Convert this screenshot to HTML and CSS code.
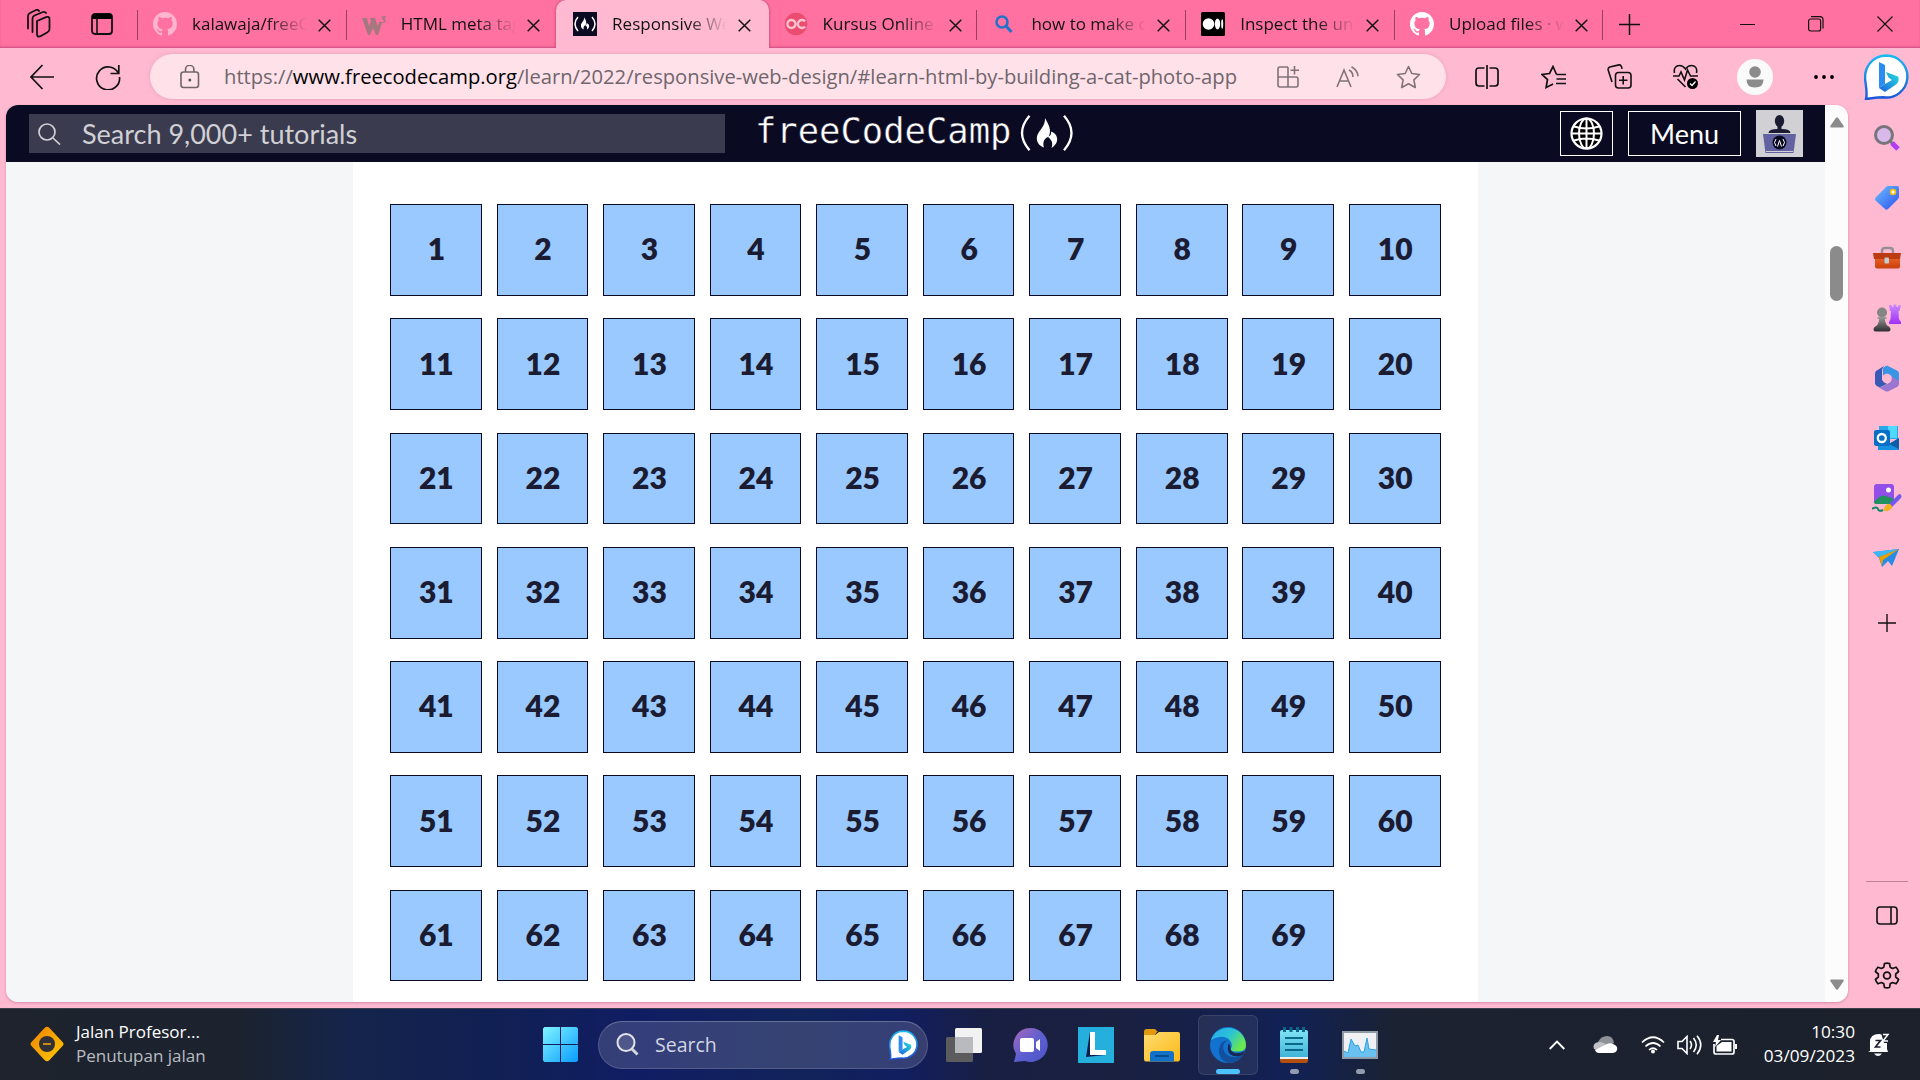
FILE: index.html
```html
<!DOCTYPE html>
<html lang="en">
<head>
<meta charset="utf-8">
<title>Responsive Web Design</title>
<link rel="stylesheet" href="styles.css">
</head>
<body>
<svg class="defs" aria-hidden="true">
  <defs>
    <linearGradient id="gBlue" x1="0" y1="0" x2="1" y2="1"><stop offset="0" stop-color="#6cc0ff"/><stop offset="1" stop-color="#2b50f0"/></linearGradient>
    <linearGradient id="gBing" x1="0" y1="0" x2="0" y2="1"><stop offset="0" stop-color="#1bb9f2"/><stop offset="1" stop-color="#1b55d8"/></linearGradient>
    <linearGradient id="gBing2" x1="0" y1="1" x2="1" y2="0"><stop offset="0" stop-color="#1c5fe0"/><stop offset="1" stop-color="#25e0dc"/></linearGradient>
    <linearGradient id="gPurple" x1="0" y1="0" x2="0" y2="1"><stop offset="0" stop-color="#c98bff"/><stop offset="1" stop-color="#a030f5"/></linearGradient>
    <linearGradient id="gGray" x1="0" y1="0" x2="0" y2="1"><stop offset="0" stop-color="#999"/><stop offset="1" stop-color="#2d2d30"/></linearGradient>
    <linearGradient id="gWin" x1="0" y1="0" x2="1" y2="1"><stop offset="0" stop-color="#7ff5ff"/><stop offset="1" stop-color="#0a9bff"/></linearGradient>
    <linearGradient id="gChat" x1="0" y1="0" x2="1" y2="1"><stop offset="0" stop-color="#a868b8"/><stop offset=".5" stop-color="#5f5fd0"/><stop offset="1" stop-color="#4a55c8"/></linearGradient>
    <linearGradient id="gFolder" x1="0" y1="0" x2="1" y2="1"><stop offset="0" stop-color="#ffdc72"/><stop offset="1" stop-color="#fbb914"/></linearGradient>
    <linearGradient id="gEdgeTop" x1="0" y1="0" x2="1" y2=".5"><stop offset="0" stop-color="#2aa8ee"/><stop offset=".55" stop-color="#2bc3d6"/><stop offset="1" stop-color="#6ae84e"/></linearGradient>
    <linearGradient id="gOrange" x1="0" y1="0" x2="1" y2="1"><stop offset="0" stop-color="#f08000"/><stop offset="1" stop-color="#ffcc00"/></linearGradient>
    <linearGradient id="gBox" x1="0" y1="0" x2="0" y2="1"><stop offset="0" stop-color="#f06a2c"/><stop offset="1" stop-color="#c93f0c"/></linearGradient>
    <linearGradient id="gNote" x1="0" y1="0" x2="0" y2="1"><stop offset="0" stop-color="#7fe3f5"/><stop offset="1" stop-color="#42b4d6"/></linearGradient>
    <symbol id="close" viewBox="0 0 13 13"><path d="M.7.7l11.600 11.600M12.300.7L.7 12.300" fill="none" stroke="#111" stroke-width="1.500"/></symbol>
    <symbol id="github" viewBox="0 0 16 16"><path fill="currentColor" d="M8 0C3.580 0 0 3.580 0 8c0 3.540 2.290 6.530 5.470 7.590.4.070.550-.170.550-.380 0-.190-.010-.820-.010-1.490-2.010.370-2.530-.490-2.690-.940-.090-.230-.480-.940-.820-1.130-.280-.150-.680-.520-.010-.530.630-.010 1.080.580 1.230.820.720 1.210 1.870.870 2.330.660.070-.520.280-.870.510-1.070-1.780-.2-3.640-.890-3.640-3.950 0-.870.310-1.590.820-2.150-.080-.2-.360-1.020.080-2.120 0 0 .670-.210 2.200.820a7.400 7.400 0 0 1 4 0c1.530-1.040 2.200-.820 2.200-.820.440 1.100.160 1.920.080 2.120.510.560.820 1.270.820 2.150 0 3.070-1.870 3.750-3.650 3.950.290.250.540.730.540 1.480 0 1.070-.010 1.930-.010 2.200 0 .210.150.460.550.380A8 8 0 0 0 16 8c0-4.420-3.580-8-8-8z"/></symbol>
    <symbol id="flame" viewBox="0 0 22 30"><path fill="currentColor" d="M9 0c2 4 5 8 5 13 0 2-.5 4-1.500 5.500 2-.5 3-2.500 2.500-5C19.500 15 22 19 21 23c-.7 3-3 5.500-5.500 7 1.500-4 1-7.500-3.500-11-3 1-6 5-4 10.500C3 28 0 23.500 1 18.500 2 13 9.500 9 9 0z"/></symbol>
    <symbol id="bing" viewBox="0 0 45 46"><path d="M22.500 1.500a21 21 0 1 1-3 41.800c-6 0-10 .7-17.500 1.700 1.200-4 .6-9-.4-16C-1.200 14 8 1.500 22.500 1.500z" fill="#fff" stroke="url(#gBing)" stroke-width="2.400"/><path d="M15 8l6 3v19l-6 4z" fill="#2b8df2"/><path d="M15 34l6-4 7-4-3.500-2.500L22 18l12 4.500c1.500 3 .5 6-2 8L21 38z" fill="url(#gBing2)"/></symbol>
  </defs>
</svg>
<div class="desktop">
  <header class="tabstrip">
    <div class="tab-tools">
      <svg width="26" height="30" viewBox="0 0 26 30"><g fill="none" stroke="#111" stroke-width="1.800" stroke-linejoin="round" stroke-linecap="round"><path d="M11 12l9-3.800q3.500-1.200 3.500 2V20q0 2.200-2 3.200l-7 4q-3.500 1.400-3.500-2z"/><path d="M6.500 23V9.500q0-2 2-3L17 3q2-.7 3 1"/><path d="M2 19.500V7q0-2 2-3l6-3q2-.7 3 1"/></g></svg>
      <svg width="22" height="22" viewBox="0 0 22 22"><rect x="1" y="1" width="20" height="20" rx="3" fill="none" stroke="#111" stroke-width="1.800"/><path d="M1 6V3.500Q1 1 3.500 1h15Q21 1 21 3.500V6z" fill="#000"/><path d="M6 6v15" stroke="#111" stroke-width="1.600"/></svg>
    </div>
    <div class="tab sep"><svg class="fav pale" viewBox="0 0 16 16"><use href="#github"/></svg><span class="title">kalawaja/freeCodeCamp</span><svg class="x"><use href="#close"/></svg></div>
    <div class="tab sep"><svg class="fav" viewBox="0 0 24 24"><path d="M0 6h5l2 8 2-5-1-3h5l2.500 8L18 9l2 2-4 12h-2l-3-7-3 7H6z" fill="#a5777f"/><path d="M19.500 5h3.500l-2 2.200q2.500.2 2 2-.7 1.500-3 1" fill="none" stroke="#a5777f" stroke-width="1.300"/></svg><span class="title">HTML meta tags</span><svg class="x"><use href="#close"/></svg></div>
    <div class="tab active"><svg class="fav" viewBox="0 0 24 24"><path d="M0 0h24v24H0z" fill="#0a0a23"/><path d="M5 5q-6 7 0 14M19 5q6 7 0 14" fill="none" stroke="#fff" stroke-width="1.500"/><svg x="7.500" y="5" width="9" height="13" color="#fff"><use href="#flame"/></svg></svg><span class="title">Responsive Web Design</span><svg class="x"><use href="#close"/></svg></div>
    <div class="tab"><svg class="fav" viewBox="0 0 24 24"><circle cx="12" cy="12" r="11.200" fill="#ea4d70"/><path d="M10.500 9.500a4 4 0 1 0 0 5M21 9.500a4 4 0 1 0 0 5M10 8.500q3 3 0 7" fill="none" stroke="#f9c3d0" stroke-width="2.300"/></svg><span class="title">Kursus Online</span><svg class="x"><use href="#close"/></svg></div>
    <div class="tab sep"><svg class="fav" viewBox="0 0 24 24"><circle cx="10" cy="10" r="5.500" fill="none" stroke="#2472c8" stroke-width="2.600"/><path d="M14 14l5.500 6" stroke="#2472c8" stroke-width="3"/></svg><span class="title">how to make can</span><svg class="x"><use href="#close"/></svg></div>
    <div class="tab sep"><svg class="fav" viewBox="0 0 24 24"><rect width="24" height="24" rx="1.500"/><g fill="#fff"><circle cx="7.500" cy="12" r="5.800"/><ellipse cx="16.500" cy="12" rx="2.700" ry="5.400"/><ellipse cx="21.200" cy="12" rx="1" ry="4.800"/></g></svg><span class="title">Inspect the unit</span><svg class="x"><use href="#close"/></svg></div>
    <div class="tab sep last"><svg class="fav white" viewBox="0 0 16 16"><use href="#github"/></svg><span class="title">Upload files · web</span><svg class="x"><use href="#close"/></svg></div>
    <svg class="newtab" width="21" height="21"><path d="M10.500 0v21M0 10.500h21" stroke="#111" stroke-width="1.500"/></svg>
    <div class="window-buttons">
      <svg width="15" height="15"><path d="M0 7.500h15" stroke="#111"/></svg>
      <svg width="16" height="16"><rect x=".6" y="3" width="12" height="12" rx="2" fill="none" stroke="#111" stroke-width="1.200"/><path d="M3 .6h9q3 0 3 3v9" fill="none" stroke="#111" stroke-width="1.200"/></svg>
      <svg width="16" height="16"><path d="M.5.5l15 15M15.500.5l-15 15" stroke="#111" stroke-width="1.200"/></svg>
    </div>
  </header>

  <div class="browser">
    <div class="main">
      <nav class="toolbar">
        <div class="nav-cell"><svg width="24" height="26" viewBox="0 0 24 26"><path d="M12.500 1L1 13l11.500 12M1 13h23" fill="none" stroke="#111" stroke-width="1.700"/></svg></div>
        <div class="nav-cell"><svg width="26" height="26" viewBox="0 0 26 26"><path d="M23.500 9.500A11.500 11.500 0 1 0 24.500 13M23.800 1v8.500H15.500" fill="none" stroke="#111" stroke-width="1.700"/></svg></div>
        <div class="address">
          <svg class="lock" width="20" height="24" viewBox="0 0 20 24"><g fill="none" stroke="#71656c" stroke-width="1.600"><rect x="1" y="7" width="17.500" height="15.500" rx="2.500"/><path d="M5.500 7V4.500a4.200 4.200 0 0 1 8.400 0V7"/></g><circle cx="9.800" cy="15" r="1.500" fill="#555"/></svg>
          <span class="url">https://<b>www.freecodecamp.org</b>/learn/2022/responsive-web-design/#learn-html-by-building-a-cat-photo-app</span>
          <div class="addr-cell"><svg width="22" height="22" viewBox="0 0 22 22"><g fill="none" stroke="#817279" stroke-width="1.600"><path d="M11 1H3Q1 1 1 3v16q0 2 2 2h16q2 0 2-2v-6q0-2-2-2H1M11 1v20M17.500 0v8.500M13.500 4.300h8.500"/></g></svg></div>
          <div class="addr-cell"><svg width="24" height="22" viewBox="0 0 24 22"><g fill="none" stroke="#817279" stroke-width="1.600"><path d="M1 21L8 4l7 17M3.500 15h9M13 4q4 2 4 7M15.500.8q6 3.200 6.500 9.500"/></g></svg></div>
          <div class="addr-cell"><svg width="25" height="24" viewBox="0 0 25 24"><path d="M12.500 1.500l3.300 7 7.700 1-5.600 5.300 1.400 7.700-6.800-3.800-6.800 3.800 1.400-7.700L1.500 9.500l7.700-1z" fill="none" stroke="#817279" stroke-width="1.600" stroke-linejoin="round"/></svg></div>
        </div>
        <div class="tool"><svg width="24" height="24" viewBox="0 0 24 24"><path d="M9.500 3H4Q1 3 1 6v12q0 3 3 3h5.500M14.500 3H20q3 0 3 3v12q0 3-3 3h-5.500M12 0v24" fill="none" stroke="#111" stroke-width="1.700"/></svg></div>
        <div class="tool"><svg width="25" height="24" viewBox="0 0 25 24"><path d="M15.500 9.500L12 1.500 8.500 8.500 1 9.500l5.500 5-1.400 8 7-3.500M15.500 9.500H25M15.500 12.500M15.500 14h9.500M15 18.500h10" fill="none" stroke="#111" stroke-width="1.700"/></svg></div>
        <div class="tool"><svg width="25" height="25" viewBox="0 0 25 25"><g fill="none" stroke="#111" stroke-width="1.600"><rect x="8.500" y="8.500" width="15.500" height="15.500" rx="3"/><path d="M16.200 12v8.500M12 16.300h8.500M5 18L1.200 6q-.5-2 1.500-3L12 .9q2.500-.2 3 4"/></g></svg></div>
        <div class="tool"><svg width="25" height="25" viewBox="0 0 25 25"><g fill="none" stroke="#111" stroke-width="1.600"><path d="M1.500 9C.5 4 3 1.500 6.500 1.500q3.500 0 6 3.500 2.500-3.500 6-3.500C22 1.500 24.500 4 23.500 9M0 12h6l2-4 3.500 8 3-10 3 6H25M4.500 15l8 8"/></g><circle cx="19.500" cy="19.500" r="5.500"/><path d="M17 19.500l2 2 3.500-4" fill="none" stroke="#fff" stroke-width="1.300"/></svg></div>
        <div class="tool profile"><svg width="36" height="36"><circle cx="18" cy="18" r="18" fill="#fafafa"/><circle cx="18" cy="13" r="5.800" fill="#8b8b8b"/><path d="M9.500 20.500h17q0 8-8.500 8t-8.500-8z" fill="#8b8b8b"/></svg></div>
        <div class="tool dots"><svg width="20" height="4"><circle cx="2" cy="2" r="1.900"/><circle cx="10" cy="2" r="1.900"/><circle cx="18" cy="2" r="1.900"/></svg></div>
      </nav>

      <div class="viewport">
        <div class="page">
          <div class="site-header">
            <div class="site-search"><svg width="23" height="22" viewBox="0 0 23 22"><circle cx="9" cy="9" r="8" fill="none" stroke="#d0d0d5" stroke-width="1.700"/><path d="M15 15l7 6.500" stroke="#d0d0d5" stroke-width="1.700"/></svg><span>Search 9,000+ tutorials</span></div>
            <div class="logo"><span>freeCodeCamp</span><svg width="54" height="36" viewBox="0 0 54 36"><path d="M9.500.8Q-5.500 18 9.500 35.200M44 .8Q59 18 44 35.200" fill="none" stroke="#fff" stroke-width="2.300"/><svg x="16" y="2.500" width="22" height="31" color="#fff"><use href="#flame"/></svg></svg></div>
            <div class="site-actions">
              <div class="outline globe"><svg width="33" height="33" viewBox="0 0 33 33"><circle cx="16.500" cy="16.500" r="15" fill="#000" stroke="#fff" stroke-width="2.200"/><g fill="none" stroke="#fff" stroke-width="2"><path d="M16.500 1.500v30M1.500 16.500h30M4 9.500q12.500 4 25 0M4 23.500q12.500-4 25 0"/><ellipse cx="16.500" cy="16.500" rx="7.500" ry="15"/></g></svg></div>
              <div class="outline menu">Menu</div>
              <svg class="avatar" width="47" height="47" viewBox="0 0 47 47"><path d="M0 0h47v47H0z" fill="#d0d0d5"/><ellipse cx="23.500" cy="11" rx="4.700" ry="6" fill="#1b1b32"/><path d="M21.500 16h4v3q9 0 9 4h-22q0-4 9-4z" fill="#1b1b32"/><path d="M7 24h33l-2.500 19h-28z" fill="#6262a0"/><circle cx="23.500" cy="32.500" r="7" fill="#0a0a23"/><path d="M20 29q-3 3.500 0 7M27 29q3 3.500 0 7M21.500 36.500l2-6 2 6" fill="none" stroke="#fff"/><path d="M10 41.500h27" stroke="#d0d0d5"/></svg>
            </div>
          </div>
          <div class="content">
            <div class="steps">
              <a>1</a><a>2</a><a>3</a><a>4</a><a>5</a><a>6</a><a>7</a><a>8</a><a>9</a><a>10</a>
              <a>11</a><a>12</a><a>13</a><a>14</a><a>15</a><a>16</a><a>17</a><a>18</a><a>19</a><a>20</a>
              <a>21</a><a>22</a><a>23</a><a>24</a><a>25</a><a>26</a><a>27</a><a>28</a><a>29</a><a>30</a>
              <a>31</a><a>32</a><a>33</a><a>34</a><a>35</a><a>36</a><a>37</a><a>38</a><a>39</a><a>40</a>
              <a>41</a><a>42</a><a>43</a><a>44</a><a>45</a><a>46</a><a>47</a><a>48</a><a>49</a><a>50</a>
              <a>51</a><a>52</a><a>53</a><a>54</a><a>55</a><a>56</a><a>57</a><a>58</a><a>59</a><a>60</a>
              <a>61</a><a>62</a><a>63</a><a>64</a><a>65</a><a>66</a><a>67</a><a>68</a><a>69</a>
            </div>
          </div>
        </div>
        <div class="scrollbar">
          <svg width="14" height="11"><path d="M6 .8q1-1 2 0L13.700 9q.3 1.500-1 1.500H1.300Q0 10.500.3 9z" fill="#8b8b8b"/></svg>
          <div class="thumb"></div>
          <svg class="down" width="14" height="11"><path d="M6 10.200q1 1 2 0L13.700 2q.3-1.500-1-1.500H1.300Q0 .5.3 2z" fill="#8b8b8b"/></svg>
        </div>
      </div>
    </div>

    <aside class="sidebar">
      <div class="side bing"><svg width="45" height="46"><use href="#bing"/></svg></div>
      <div class="side"><svg width="26" height="26" viewBox="0 0 26 26"><path d="M16 16l3 3" stroke="#777" stroke-width="3"/><path d="M18 18l6 6" stroke="#b23cf5" stroke-width="5"/><circle cx="10" cy="10" r="8.500" fill="#d9b8ea" stroke="#77757a" stroke-width="3"/></svg></div>
      <div class="side"><svg width="26" height="26" viewBox="0 0 26 26"><path d="M12 2q1-1 2-1h9q2 0 2 2v8q0 2-1 3L14 24q-1.500 1.500-3 0l-9-8q-2-2 0-4z" fill="url(#gBlue)"/><circle cx="19" cy="7" r="2.400" fill="#fff" stroke="#f2c112" stroke-width="1.800"/></svg></div>
      <div class="side"><svg width="28" height="24" viewBox="0 0 28 24"><path d="M9 8V5q0-3 3-3h5q3 0 3 3v3" fill="none" stroke="#969096" stroke-width="2.500"/><rect x="2" y="9" width="25" height="13.500" rx="2" fill="url(#gBox)"/><path d="M0 7h28l-1 6H1z" fill="#bb3c12"/><rect x="11.500" y="11.500" width="4.500" height="6" rx="1" fill="#c3ccd0"/></svg></div>
      <div class="side"><svg width="28" height="28" viewBox="0 0 28 28"><path d="M16 1l3 .5V3h1.500V.5h3V3H25V1.500l3-.5-1.500 6h-1l.5 8 2 3v2H16v-2l1.500-3 .5-8h-1z" fill="url(#gPurple)"/><circle cx="9" cy="8.500" r="5" fill="#858585"/><path d="M4.500 13h9v1.800h-1.700q0 4 2.200 6.700 3.500 1.500 3.500 4 0 2-2 2H2.500q-2 0-2-2 0-2.500 3.500-4 2.200-2.700 2.200-6.700H4.500z" fill="url(#gGray)"/></svg></div>
      <div class="side"><svg width="26" height="27" viewBox="0 0 26 27"><path d="M13 .5l10 5q2 1 2 3v8l-8-4-4-4-4 4V3q2-2 4-2.500z" fill="#3895e5"/><path d="M10 1L2 6Q1 7 1 9v10q3 5 8 2l4-2-5-4V7q0-4 2-6z" fill="#3859b5"/><path d="M4 22q5 1 13-6V11l8 5v3q0 2-2 3l-8 4q-2 1-4 0z" fill="#9a76d1"/><circle cx="13" cy="13.500" r="4.800" fill="#ffb9d1"/></svg></div>
      <div class="side"><svg width="26" height="26" viewBox="0 0 26 26"><path d="M5 1h19v13H5z" fill="#28a8ea"/><path d="M14 1h9v12h-9z" fill="#50d9ff"/><path d="M4 14l11 5 10-6v12H4z" fill="#1490df"/><path d="M15 19l10 5V13z" fill="#0a5ea8"/><rect y="5" width="16" height="16" rx="2" fill="#086fc6"/><circle cx="7.800" cy="13" r="4" fill="none" stroke="#fff" stroke-width="2.300"/></svg></div>
      <div class="side"><svg width="30" height="28" viewBox="0 0 30 28"><rect x="2" y="0" width="20" height="20" rx="3" fill="#914ee8"/><path d="M2 18q7-8 12-6 4 2 7 2v3q0 3-3 3H5q-3 0-3-2z" fill="#20915f"/><circle cx="16.500" cy="6" r="2.500" fill="#fff"/><path d="M29 11q-1-2-3 0l-9 9 3 3 9-9q1-2 0-3z" fill="#7258ee"/><path d="M17 20q3 0 3 4-4 5-9 2l2-3q1-3 4-3z" fill="#efb11c"/><path d="M0 25q5-3 6 0t5 1" fill="none" stroke="#158464" stroke-width="2"/></svg></div>
      <div class="side"><svg width="27" height="20" viewBox="0 0 27 20"><path d="M0 4l26-3-7 17-4-5-6 6-3-9z" fill="#278be8"/><path d="M0 4L26 1 6 9z" fill="#3bb8f5"/><path d="M26 1L6 9l3 9 1-6z" fill="#eaa000"/></svg></div>
      <div class="side plus"><svg width="18" height="18"><path d="M9 0v18M0 9h18" stroke="#111" stroke-width="1.400"/></svg></div>
      <div class="side-line"></div>
      <div class="side"><svg width="22" height="19" viewBox="0 0 22 19"><rect x="1" y="1" width="20" height="17" rx="3" fill="none" stroke="#111" stroke-width="1.600"/><path d="M15 1v17" stroke="#111" stroke-width="1.600"/></svg></div>
      <div class="side"><svg width="26" height="27" viewBox="0 0 26 27"><path d="M10.500 1.500q2.500-.6 5 0l.7 3.700 2.300 1.300 3.600-1.300q1.600 1.800 2.500 4.300L21.700 12v3l2.900 2.500q-.9 2.500-2.500 4.300l-3.600-1.300-2.300 1.300-.7 3.700q-2.500.6-5 0l-.7-3.700-2.300-1.300-3.600 1.300q-1.600-1.800-2.500-4.300L4.300 15v-3L1.400 9.500q.9-2.500 2.500-4.300l3.600 1.300 2.300-1.300z" fill="none" stroke="#111" stroke-width="1.700" stroke-linejoin="round"/><circle cx="13" cy="13.500" r="3.400" fill="none" stroke="#111" stroke-width="1.800"/></svg></div>
    </aside>
  </div>

  <footer class="taskbar">
    <svg class="traffic" width="34" height="36" viewBox="0 0 34 36"><path d="M14.500 2q2.500-2.500 5 0l13 14q2 2 0 4l-13 14q-2.500 2.500-5 0l-13-14q-2-2 0-4z" fill="url(#gOrange)"/><circle cx="17" cy="18" r="8" fill="#2f3136"/><path d="M13 18h8" stroke="#f4a20a" stroke-width="1.600"/></svg>
    <div class="widget"><div>Jalan Profesor...</div><div class="dim">Penutupan jalan</div></div>
    <svg class="start" width="35" height="35"><path d="M1.500 0H17v17H0V1.500zM18 0h15.500L35 1.500V17H18zM0 18h17v17H1.500L0 33.500zM18 18h17v15.500L33.500 35H18z" fill="url(#gWin)"/></svg>
    <div class="task-search"><svg width="23" height="23" viewBox="0 0 23 23"><circle cx="10" cy="9.500" r="8.500" fill="#ffffff22" stroke="#e3e3ea" stroke-width="2"/><path d="M16 16l5.500 5.500" stroke="#d4d5df" stroke-width="3"/></svg><span>Search</span><svg class="tbing" width="29" height="30" viewBox="0 0 45 46"><use href="#bing"/></svg></div>
    <div class="apps">
      <div class="app"><svg width="36" height="36"><rect x="9" y="1" width="27" height="25" rx="1.500" fill="#f2f2f2"/><rect y="10" width="27" height="25" rx="1.500" fill="#5c5c5e"/><path d="M9 10h18v16H9z" fill="#b9babd"/></svg></div>
      <div class="app"><svg width="36" height="36"><path d="M18 1a17 17 0 1 1-5 33l-11 1 2-8A17 17 0 0 1 18 1z" fill="url(#gChat)"/><rect x="8" y="11" width="14" height="14" rx="2" fill="#fff"/><path d="M24 15l4-3v12l-4-3z" fill="#fff"/></svg></div>
      <div class="app"><svg width="36" height="36"><path d="M0 0h36v36H0z" fill="#25afdc"/><path d="M12 5L8 30l19-2-13-4z" fill="#0c2050"/><path d="M12 5h5v18h11v5H12z" fill="#fff"/></svg></div>
      <div class="app"><svg width="36" height="36"><path d="M0 5q0-3 3-3h8l3 3h-1l-3 4H0z" fill="#e09a0c"/><path d="M0 8h11l4-3h19q2 0 2 2v25q0 2.500-2 2.500H2q-2 0-2-2.500z" fill="url(#gFolder)"/><path d="M6 34.500V27q0-3 3-3h18q3 0 3 3v7.500z" fill="#1271c8"/><path d="M11 29h14" stroke="#0a4b8c" stroke-width="2"/></svg></div>
      <div class="app open current"><svg width="36" height="36" viewBox="0 0 36 36"><circle cx="18" cy="18" r="18" fill="#1272cf"/><path d="M1 13A18 18 0 0 1 36 18q0 6-7 6.500-9 .5-8-3 2-4-1-8-6-7-19-.5z" fill="url(#gEdgeTop)"/><path d="M18 13q-8 5-3 13 6 7 18 2-4 8-14 8Q8 33 9 22q1-8 9-9z" fill="#12509d"/><path d="M20.500 20q-1 5 5 6.200 5 .5 9-2.200L33 28q-8 3-13-1-4-4-1-11z" fill="#1b2651"/></svg></div>
      <div class="app open"><svg width="28" height="36"><path d="M0 31h28v3q0 2-2 2H2q-2 0-2-2z" fill="#b4500f"/><path d="M0 28h28v4H0z" fill="#eee"/><path d="M2 3h24q2 0 2 2v25H0V5q0-2 2-2z" fill="url(#gNote)"/><path d="M5 11h18M5 17h18M5 23h18" stroke="#09698b" stroke-width="2"/><path d="M4.500 0v5M11 0v5M17.500 0v5M23.500 0v5" stroke="#09698b" stroke-width="3"/></svg></div>
      <div class="app open"><svg width="36" height="28"><rect x="1" y="1" width="34" height="26" fill="#eff1f5" stroke="#8f9aa7" stroke-width="2"/><path d="M2 20l4 2 3-14 4 7 3-1 3 7h3l3-14 2 11 7 1v7H2z" fill="#6bc1ef"/><path d="M2 20l4 2 3-14 4 7 3-1 3 7h3l3-14 2 11 7 1" fill="none" stroke="#2da3df"/></svg></div>
    </div>
    <div class="tray">
      <svg class="chev" width="16" height="10"><path d="M.7 9L8 1.500 15.300 9" fill="none" stroke="#fff" stroke-width="1.800"/></svg>
      <svg class="cloud" width="25" height="17"><path d="M5 6Q8 0 14 0t7 7L10 12z" fill="#8e9197"/><path d="M1 13Q-1 7 6 6q5 0 9 4l-9 5z" fill="#bfc1c4"/><path d="M2 14l12-6q4-2 8 1 3 2 2 5t-5 3H6q-3 0-4-3z" fill="#fff"/></svg>
      <svg class="wifi" width="24" height="18"><path d="M1 6.500q11-10.500 22 0M4.500 10.500q7.500-7 15 0M8 14q4-4 8 0" fill="none" stroke="#fff" stroke-width="1.700"/><circle cx="12" cy="15.500" r="2" fill="#fff"/></svg>
      <svg class="sound" width="25" height="20"><path d="M1 6.500h4l5-5v17l-5-5H1zM13 6q3 4 0 8M16.500 3q5.500 7 0 14M20 .8q7.500 9.200 0 18.400" fill="none" stroke="#fff" stroke-width="1.600"/></svg>
      <svg class="battery" width="24" height="20"><path d="M8 4.500h11q2 0 2 2V17q0 2-2 2H3q-2 0-2-2V9" fill="none" stroke="#fff" stroke-width="1.700"/><path d="M9 7h9.500v9.500h-15V11z" fill="#fff"/><path d="M22 9h2v5h-2zM4 0L0 7h3l-1 5 6-7H5l1-5z" fill="#fff"/></svg>
      <div class="clock"><div>10:30</div><div>03/09/2023</div></div>
      <svg class="bell" width="22" height="24"><path d="M2 18V9q0-8 9-8 8 0 8 8v7l1 3H0z" fill="#fff"/><path d="M6 20.500h8q-4 5-8 0z" fill="#fff"/><path d="M13 0h9v10h-6z" fill="#1c222d"/><path d="M7.500 7.500h5L7.500 14h5" fill="none" stroke="#1c222d" stroke-width="1.700"/><path d="M15 1.500h5L15 8h5" fill="none" stroke="#fff" stroke-width="1.500"/></svg>
    </div>
  </footer>
</div>
</body>
</html>
```
FILE: styles.css
```css
* { box-sizing: border-box; }
body { margin: 0; overflow: hidden; font-family: "Open Sans", "Noto Sans", sans-serif; color: #111; }
svg { display: block; flex: none; }
.defs { position: absolute; width: 0; height: 0; }
.desktop { width: 1920px; height: 1080px; display: flex; flex-direction: column; background: #ffbad2; }

/* tab strip */
.tabstrip { height: 48px; flex: none; display: flex; align-items: center; background: #ff71a1; box-shadow: inset 0 -1px #d9578a, inset 0 -2px 2px #e8628f; }
.tab-tools { width: 137px; flex: none; padding-left: 26px; display: flex; align-items: center; gap: 39px; }
.tab { width: 208.800px; height: 48px; flex: none; padding-left: 16px; display: flex; align-items: center; position: relative; }
.tab.sep::before { content: ""; position: absolute; left: 0; top: 10px; width: 1px; height: 30px; background: #93415f; }
.tab.sep + .tab.sep { padding-left: 16px; }
.tab.active { width: 213px; margin-left: 1.500px; margin-right: -1.500px; padding-left: 17px; background: #ffbad2; border-radius: 10px 10px 0 0; box-shadow: 0 0 3px #a33a62; clip-path: inset(0 -4px 0 -4px); }
.tab.last::after { content: ""; position: absolute; right: 0; top: 10px; width: 1px; height: 30px; background: #93415f; }
.fav { width: 24px; height: 24px; }
.fav.pale { color: #ffb5cd; }
.fav.white { color: #fff; }
.title { width: 116px; margin-left: 15px; padding-bottom: 1px; font-size: 17px; line-height: 24px; white-space: nowrap; overflow: hidden; -webkit-mask-image: linear-gradient(90deg, #000 75px, transparent 115px); mask-image: linear-gradient(90deg, #000 75px, transparent 115px); }
.x { width: 13px; height: 13px; margin-left: 10px; margin-top: 2px; }
.newtab { margin-left: 16px; }
.window-buttons { margin-left: auto; padding-right: 27px; display: flex; align-items: center; gap: 53px; }

/* browser */
.browser { flex: 1; min-height: 0; display: flex; }
.main { width: 1848px; flex: none; display: flex; flex-direction: column; }
.toolbar { height: 57px; flex: none; padding-left: 9px; display: flex; align-items: center; }
.nav-cell { width: 66px; flex: none; display: flex; justify-content: center; }
.address { width: 1296px; height: 45px; flex: none; margin: 0 8px 0 9px; padding: 0 8px 0 30px; border-radius: 23px; display: flex; align-items: center; background: #ffe1ea; box-shadow: 0 0 5px #e9a2bc; }
.url { flex: 1; padding: 0 0 2px 24px; font-size: 20.200px; white-space: nowrap; color: #6f666b; }
.url b { font-weight: 400; color: #000; }
.addr-cell { width: 60px; flex: none; display: flex; justify-content: center; }
.tool { width: 66px; flex: none; display: flex; justify-content: center; }
.tool.profile { width: 74px; }
.tool.dots { width: 56px; padding-left: 8px; }
.viewport { height: 897px; margin-left: 6px; display: flex; border-radius: 12px; overflow: hidden; box-shadow: 0 1px 3px #d28aa4; }
.page { width: 1819px; background: #f5f6f8; }
.site-header { height: 57px; display: flex; align-items: center; padding-left: 23px; background: #0a0a23; font-family: Lato, sans-serif; }
.site-search { width: 696px; height: 39px; padding-left: 9px; display: flex; align-items: center; gap: 21px; background: #3b3b4f; color: #d0d0d5; font-size: 27px; }
.logo { margin-left: 30px; padding-bottom: 2px; display: flex; align-items: center; gap: 9px; color: #fff; font: 35.500px/40px "DejaVu Sans Mono", monospace; -webkit-text-stroke: .4px #0a0a23; }
.logo span { padding-bottom: 3px; }
.site-actions { margin-left: auto; padding-right: 22px; display: flex; align-items: center; gap: 15px; }
.outline { height: 45px; border: 1px solid #fff; display: flex; align-items: center; justify-content: center; color: #fff; font-size: 27px; }
.globe { width: 53px; }
.menu { width: 113px; }
.content { width: 1125px; height: 840px; margin-left: 347px; padding: 42px 37px 0; background: #fff; }
.steps { display: grid; grid-template-columns: repeat(10, 91.700px); grid-auto-rows: 91.700px; gap: 22.600px 14.860px; }
.steps a { display: flex; align-items: center; justify-content: center; padding: 0 0 3px 1px; border: 1px solid #0a0a23; background: #99c9ff; color: #1b1b32; font: 800 30px Lato, sans-serif; }
.scrollbar { width: 23px; padding: 12px 5px; display: flex; flex-direction: column; align-items: center; background: #fcfcfc; }
.thumb { width: 13px; height: 55px; margin-top: 118px; border-radius: 7px; background: #8b8b8b; }
.down { margin-top: auto; }

/* sidebar */
.sidebar { width: 72px; padding: 0 0 3px 5px; display: flex; flex-direction: column; align-items: stretch; }
.side { height: 60px; flex: none; display: flex; align-items: center; justify-content: center; }
.side.bing { height: 60px; padding-bottom: 3px; }
.side.plus { height: 70px; }
.side-line { width: 42px; height: 1px; margin: auto 0 3px 13px; background: #bd8198; }

/* taskbar */
.taskbar { height: 72px; flex: none; display: flex; align-items: center; border-top: 1px solid #3b424d; background: linear-gradient(90deg, #1e232d 0, #1c232f 240px, #14244b 350px, #112052 480px, #111d63 640px, #12235a 800px, #111e60 900px, #191f42 990px, #1a2040 1120px, #112155 1290px, #1b2231 1400px, #1c212b 1920px); color: #fff; }
.traffic { margin-left: 30px; margin-bottom: 2px; }
.widget { width: 479px; padding: 0 0 2px 12px; font-size: 17px; line-height: 24px; }
.dim { color: #b9bcc2; }
.task-search { width: 330px; height: 48px; margin-left: 20px; padding: 0 9px 0 17px; border: 1px solid #ffffff26; border-top-color: #ffffff40; border-radius: 24px; display: flex; align-items: center; background: #ffffff26; color: #d3d6e2; font-size: 19.500px; }
.task-search span { flex: 1; padding-left: 16px; }
.apps { display: flex; margin-left: 3px; }
.app { width: 66px; height: 60px; display: flex; align-items: center; justify-content: center; position: relative; }
.current { width: 60px; margin: 0 3px; border: 1px solid #ffffff18; border-radius: 6px; background: #ffffff12; }
.open::after { content: ""; position: absolute; bottom: 1px; width: 9px; height: 5px; border-radius: 3px; background: #959bae; }
.current::after { bottom: 0; width: 24px; background: #4cc2ff; }
.tray { margin-left: auto; padding-right: 30px; display: flex; align-items: center; }
.cloud { margin-left: 28px; }
.wifi { margin-left: 23px; }
.sound { margin-left: 12px; }
.battery { margin-left: 11px; }
.clock { width: 118px; padding-bottom: 2px; text-align: right; font-size: 17.200px; line-height: 24px; }
.bell { margin-left: 13px; }
```
